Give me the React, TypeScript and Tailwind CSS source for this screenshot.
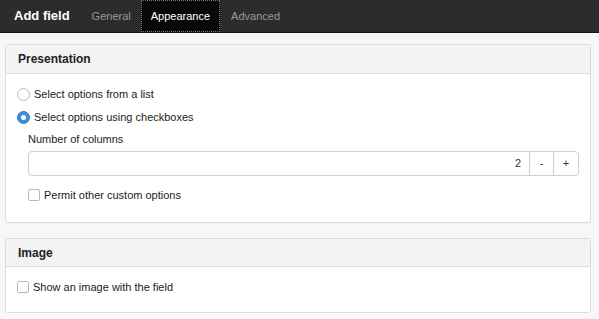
import React from 'react';

const font = { fontFamily: '"Liberation Sans", Arial, sans-serif' };

const Radio: React.FC<{ checked?: boolean; label: string }> = ({ checked, label }) => (
    <div className="flex items-center h-[20px] gap-[4px]">
        {checked ? (
            <span className="w-[13px] h-[13px] rounded-full bg-[#3a8fdc] border border-[#2f7dc6] flex items-center justify-center">
                <span className="w-[5px] h-[5px] rounded-full bg-white" />
            </span>
        ) : (
            <span className="w-[13px] h-[13px] rounded-full bg-white border border-[#b9b9b9]" />
        )}
        <span className="text-[11px] text-[#222]">{label}</span>
    </div>
);

const Checkbox: React.FC<{ label: string }> = ({ label }) => (
    <div className="flex items-center h-[20px] gap-[4px]">
        <span className="w-[12px] h-[12px] rounded-[2px] bg-white border border-[#b9b9b9]" />
        <span className="text-[11px] text-[#222]">{label}</span>
    </div>
);

export default function App() {
    return (
        <div style={font} className="w-[599px] h-[319px] bg-[#f7f7f7] overflow-hidden">
            {/* Top bar */}
            <div className="h-[33px] bg-[#2c2c2c] border-b border-[#151515] flex items-stretch">
                <div className="pl-[14px] pr-[12px] flex items-center text-white text-[13px] font-bold">Add field</div>
                <div className="px-[10px] flex items-center text-[11px] text-[#9a9a9a]">General</div>
                <div className="px-[9px] flex items-center text-[11px] text-white bg-[#080808] border border-dotted border-[#777]">Appearance</div>
                <div className="px-[11px] flex items-center text-[11px] text-[#9a9a9a]">Advanced</div>
            </div>

            {/* Presentation */}
            <div className="ml-[5px] mr-[8px] mt-[11px] bg-white border border-[#dcdcdc] rounded-[3px] shadow-[0_1px_1px_rgba(0,0,0,0.03)]">
                <div className="h-[29px] bg-[#f3f3f3] border-b border-[#dddddd] rounded-t-[3px] px-[12px] flex items-center text-[12px] font-bold text-[#222]">
                    Presentation
                </div>
                <div className="pt-[10px] pb-[17px] pl-[11px] pr-[11px]">
                    <Radio label="Select options from a list" />
                    <div className="mt-[3px]">
                        <Radio checked label="Select options using checkboxes" />
                    </div>
                    <div className="pl-[11px]">
                        <div className="mt-[4px] h-[16px] flex items-center text-[11px] text-[#222]">Number of columns</div>
                        <div className="mt-[4px] h-[25px] flex border border-[#cfcfcf] rounded-[4px] overflow-hidden">
                            <div className="flex-1 flex items-center justify-end pr-[8px] text-[11px] text-[#333]">2</div>
                            <div className="w-[24px] border-l border-[#cfcfcf] flex items-center justify-center text-[11px] text-[#333]">-</div>
                            <div className="w-[25px] border-l border-[#cfcfcf] flex items-center justify-center text-[11px] text-[#333]">+</div>
                        </div>
                        <div className="mt-[9px]">
                            <Checkbox label="Permit other custom options" />
                        </div>
                    </div>
                </div>
            </div>

            {/* Image */}
            <div className="ml-[5px] mr-[8px] mt-[15px] bg-white border border-[#dcdcdc] rounded-[3px]">
                <div className="h-[28px] bg-[#f3f3f3] border-b border-[#dddddd] rounded-t-[3px] px-[12px] flex items-center text-[12px] font-bold text-[#222]">
                    Image
                </div>
                <div className="pt-[10px] pb-[15px] pl-[11px] pr-[11px]">
                    <Checkbox label="Show an image with the field" />
                </div>
            </div>
        </div>
    );
}
